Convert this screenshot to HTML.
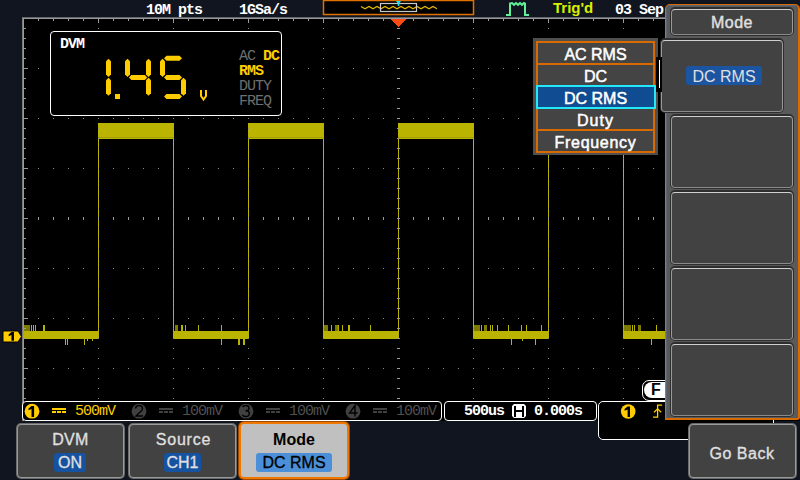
<!DOCTYPE html>
<html><head><meta charset="utf-8"><style>
*{margin:0;padding:0;box-sizing:border-box}
html,body{width:800px;height:480px;overflow:hidden;background:#11151f}
body{position:relative;font-family:"Liberation Sans",sans-serif}
.a{position:absolute}
.sb{background:#424242;border:1px solid;border-color:#cfcfcf #9a9a9a #8a8a8a #9a9a9a;box-shadow:0 0 0 1px #2e2e2e,0 -1px 0 1px #2e2e2e;border-radius:4px}
.bb{background:#424242;border:1px solid #9a9a9a;box-shadow:0 0 0 1px #6a6a6a;border-radius:4px}
.mono{font-family:"Liberation Mono",monospace;font-weight:700;font-size:15px;letter-spacing:-1px;white-space:pre;line-height:15px}
.sans{font-family:"Liberation Sans",sans-serif;font-weight:700;font-size:16px;white-space:pre;line-height:17px}
.c{text-align:center}
svg{position:absolute;left:0;top:0}
</style></head><body>
<svg width="800" height="480" viewBox="0 0 800 480" shape-rendering="crispEdges">
<rect x="22" y="17" width="778" height="404" fill="#000"/>
<rect x="22" y="17" width="778" height="1" fill="#62656c"/>
<rect x="22" y="18" width="778" height="1" fill="#9a9a9a"/>
<rect x="22" y="17" width="1" height="404" fill="#7a7a7a"/>
<rect x="23" y="18" width="1" height="403" fill="#9a9a9a"/>
<path d="M24 331h74v8h-74zM173 331h75v8h-75zM323 331h75v8h-75zM473 331h75v8h-75zM623 331h45v8h-45zM98 123h76v16h-76zM248 123h76v16h-76zM398 123h76v16h-76zM548 123h76v16h-76zM98 123h1v216h-1zM173 123h1v216h-1zM248 123h1v216h-1zM323 123h1v216h-1zM398 123h1v216h-1zM473 123h1v216h-1zM548 123h1v216h-1zM623 123h1v216h-1zM31 325h1v6h-1zM33 325h1v6h-1zM35 325h1v6h-1zM43 325h2v6h-2zM181 325h2v6h-2zM185 325h1v6h-1zM198 325h1v6h-1zM221 325h1v6h-1zM331 325h1v6h-1zM338 325h1v6h-1zM342 325h1v6h-1zM348 325h2v6h-2zM370 325h1v6h-1zM481 325h1v6h-1zM490 325h1v6h-1zM492 325h1v6h-1zM497 325h1v6h-1zM508 325h1v6h-1zM521 325h1v6h-1zM526 325h1v6h-1zM541 325h1v6h-1zM632 325h1v6h-1zM634 325h1v6h-1zM656 325h1v6h-1zM65 339h1v6h-1zM67 339h1v6h-1zM84 339h1v6h-1zM87 339h1v2h-1zM92 339h1v2h-1zM221 339h1v6h-1zM238 339h2v6h-2zM243 339h2v6h-2zM511 339h1v6h-1zM522 339h1v2h-1zM535 339h1v6h-1zM651 339h1v6h-1z" fill="#bab400"/>
<path d="M24 325h6v6h-6zM175 325h3v6h-3zM324 325h4v6h-4zM335 325h3v6h-3zM474 325h6v6h-6zM484 325h3v6h-3zM624 325h7v6h-7zM638 325h3v6h-3z" fill="#7d7a00"/>
<path d="M98 137h75v1h-75zM248 137h75v1h-75zM398 137h75v1h-75zM548 137h75v1h-75z" fill="#a4a000"/>
<path d="M38 19h1v2h-1zM53 19h1v2h-1zM68 19h1v2h-1zM83 19h1v2h-1zM98 19h1v4h-1zM113 19h1v2h-1zM128 19h1v2h-1zM143 19h1v2h-1zM158 19h1v2h-1zM173 19h1v4h-1zM188 19h1v2h-1zM203 19h1v2h-1zM218 19h1v2h-1zM233 19h1v2h-1zM248 19h1v4h-1zM263 19h1v2h-1zM278 19h1v2h-1zM293 19h1v2h-1zM308 19h1v2h-1zM323 19h1v4h-1zM338 19h1v2h-1zM353 19h1v2h-1zM368 19h1v2h-1zM383 19h1v2h-1zM398 19h1v4h-1zM413 19h1v2h-1zM428 19h1v2h-1zM443 19h1v2h-1zM458 19h1v2h-1zM473 19h1v4h-1zM488 19h1v2h-1zM503 19h1v2h-1zM518 19h1v2h-1zM533 19h1v2h-1zM548 19h1v4h-1zM563 19h1v2h-1zM578 19h1v2h-1zM593 19h1v2h-1zM608 19h1v2h-1zM623 19h1v4h-1zM638 19h1v2h-1zM653 19h1v2h-1zM668 19h1v2h-1zM683 19h1v2h-1zM698 19h1v4h-1zM713 19h1v2h-1zM728 19h1v2h-1zM743 19h1v2h-1zM758 19h1v2h-1zM773 19h1v4h-1zM788 19h1v2h-1zM24 28h2v1h-2zM24 38h2v1h-2zM24 48h2v1h-2zM24 58h2v1h-2zM24 68h4v1h-4zM24 78h2v1h-2zM24 88h2v1h-2zM24 98h2v1h-2zM24 108h2v1h-2zM24 118h4v1h-4zM24 128h2v1h-2zM24 138h2v1h-2zM24 148h2v1h-2zM24 158h2v1h-2zM24 168h4v1h-4zM24 178h2v1h-2zM24 188h2v1h-2zM24 198h2v1h-2zM24 208h2v1h-2zM24 218h4v1h-4zM24 228h2v1h-2zM24 238h2v1h-2zM24 248h2v1h-2zM24 258h2v1h-2zM24 268h4v1h-4zM24 278h2v1h-2zM24 288h2v1h-2zM24 298h2v1h-2zM24 308h2v1h-2zM24 318h4v1h-4zM24 328h2v1h-2zM24 338h2v1h-2zM24 348h2v1h-2zM24 358h2v1h-2zM24 368h4v1h-4zM24 378h2v1h-2zM24 388h2v1h-2zM24 398h2v1h-2zM24 408h2v1h-2zM24 418h4v1h-4z" fill="#9a9a9a"/>
<path d="M38 68h1v1h-1zM53 68h1v1h-1zM68 68h1v1h-1zM83 68h1v1h-1zM98 68h1v1h-1zM113 68h1v1h-1zM128 68h1v1h-1zM143 68h1v1h-1zM158 68h1v1h-1zM173 68h1v1h-1zM188 68h1v1h-1zM203 68h1v1h-1zM218 68h1v1h-1zM233 68h1v1h-1zM248 68h1v1h-1zM263 68h1v1h-1zM278 68h1v1h-1zM293 68h1v1h-1zM308 68h1v1h-1zM323 68h1v1h-1zM338 68h1v1h-1zM353 68h1v1h-1zM368 68h1v1h-1zM383 68h1v1h-1zM398 68h1v1h-1zM413 68h1v1h-1zM428 68h1v1h-1zM443 68h1v1h-1zM458 68h1v1h-1zM473 68h1v1h-1zM488 68h1v1h-1zM503 68h1v1h-1zM518 68h1v1h-1zM533 68h1v1h-1zM548 68h1v1h-1zM563 68h1v1h-1zM578 68h1v1h-1zM593 68h1v1h-1zM608 68h1v1h-1zM623 68h1v1h-1zM638 68h1v1h-1zM653 68h1v1h-1zM668 68h1v1h-1zM683 68h1v1h-1zM698 68h1v1h-1zM713 68h1v1h-1zM728 68h1v1h-1zM743 68h1v1h-1zM758 68h1v1h-1zM773 68h1v1h-1zM788 68h1v1h-1zM38 118h1v1h-1zM53 118h1v1h-1zM68 118h1v1h-1zM83 118h1v1h-1zM98 118h1v1h-1zM113 118h1v1h-1zM128 118h1v1h-1zM143 118h1v1h-1zM158 118h1v1h-1zM173 118h1v1h-1zM188 118h1v1h-1zM203 118h1v1h-1zM218 118h1v1h-1zM233 118h1v1h-1zM248 118h1v1h-1zM263 118h1v1h-1zM278 118h1v1h-1zM293 118h1v1h-1zM308 118h1v1h-1zM323 118h1v1h-1zM338 118h1v1h-1zM353 118h1v1h-1zM368 118h1v1h-1zM383 118h1v1h-1zM398 118h1v1h-1zM413 118h1v1h-1zM428 118h1v1h-1zM443 118h1v1h-1zM458 118h1v1h-1zM473 118h1v1h-1zM488 118h1v1h-1zM503 118h1v1h-1zM518 118h1v1h-1zM533 118h1v1h-1zM548 118h1v1h-1zM563 118h1v1h-1zM578 118h1v1h-1zM593 118h1v1h-1zM608 118h1v1h-1zM623 118h1v1h-1zM638 118h1v1h-1zM653 118h1v1h-1zM668 118h1v1h-1zM683 118h1v1h-1zM698 118h1v1h-1zM713 118h1v1h-1zM728 118h1v1h-1zM743 118h1v1h-1zM758 118h1v1h-1zM773 118h1v1h-1zM788 118h1v1h-1zM38 168h1v1h-1zM53 168h1v1h-1zM68 168h1v1h-1zM83 168h1v1h-1zM98 168h1v1h-1zM113 168h1v1h-1zM128 168h1v1h-1zM143 168h1v1h-1zM158 168h1v1h-1zM173 168h1v1h-1zM188 168h1v1h-1zM203 168h1v1h-1zM218 168h1v1h-1zM233 168h1v1h-1zM248 168h1v1h-1zM263 168h1v1h-1zM278 168h1v1h-1zM293 168h1v1h-1zM308 168h1v1h-1zM323 168h1v1h-1zM338 168h1v1h-1zM353 168h1v1h-1zM368 168h1v1h-1zM383 168h1v1h-1zM398 168h1v1h-1zM413 168h1v1h-1zM428 168h1v1h-1zM443 168h1v1h-1zM458 168h1v1h-1zM473 168h1v1h-1zM488 168h1v1h-1zM503 168h1v1h-1zM518 168h1v1h-1zM533 168h1v1h-1zM548 168h1v1h-1zM563 168h1v1h-1zM578 168h1v1h-1zM593 168h1v1h-1zM608 168h1v1h-1zM623 168h1v1h-1zM638 168h1v1h-1zM653 168h1v1h-1zM668 168h1v1h-1zM683 168h1v1h-1zM698 168h1v1h-1zM713 168h1v1h-1zM728 168h1v1h-1zM743 168h1v1h-1zM758 168h1v1h-1zM773 168h1v1h-1zM788 168h1v1h-1zM38 268h1v1h-1zM53 268h1v1h-1zM68 268h1v1h-1zM83 268h1v1h-1zM98 268h1v1h-1zM113 268h1v1h-1zM128 268h1v1h-1zM143 268h1v1h-1zM158 268h1v1h-1zM173 268h1v1h-1zM188 268h1v1h-1zM203 268h1v1h-1zM218 268h1v1h-1zM233 268h1v1h-1zM248 268h1v1h-1zM263 268h1v1h-1zM278 268h1v1h-1zM293 268h1v1h-1zM308 268h1v1h-1zM323 268h1v1h-1zM338 268h1v1h-1zM353 268h1v1h-1zM368 268h1v1h-1zM383 268h1v1h-1zM398 268h1v1h-1zM413 268h1v1h-1zM428 268h1v1h-1zM443 268h1v1h-1zM458 268h1v1h-1zM473 268h1v1h-1zM488 268h1v1h-1zM503 268h1v1h-1zM518 268h1v1h-1zM533 268h1v1h-1zM548 268h1v1h-1zM563 268h1v1h-1zM578 268h1v1h-1zM593 268h1v1h-1zM608 268h1v1h-1zM623 268h1v1h-1zM638 268h1v1h-1zM653 268h1v1h-1zM668 268h1v1h-1zM683 268h1v1h-1zM698 268h1v1h-1zM713 268h1v1h-1zM728 268h1v1h-1zM743 268h1v1h-1zM758 268h1v1h-1zM773 268h1v1h-1zM788 268h1v1h-1zM38 318h1v1h-1zM53 318h1v1h-1zM68 318h1v1h-1zM83 318h1v1h-1zM98 318h1v1h-1zM113 318h1v1h-1zM128 318h1v1h-1zM143 318h1v1h-1zM158 318h1v1h-1zM173 318h1v1h-1zM188 318h1v1h-1zM203 318h1v1h-1zM218 318h1v1h-1zM233 318h1v1h-1zM248 318h1v1h-1zM263 318h1v1h-1zM278 318h1v1h-1zM293 318h1v1h-1zM308 318h1v1h-1zM323 318h1v1h-1zM338 318h1v1h-1zM353 318h1v1h-1zM368 318h1v1h-1zM383 318h1v1h-1zM398 318h1v1h-1zM413 318h1v1h-1zM428 318h1v1h-1zM443 318h1v1h-1zM458 318h1v1h-1zM473 318h1v1h-1zM488 318h1v1h-1zM503 318h1v1h-1zM518 318h1v1h-1zM533 318h1v1h-1zM548 318h1v1h-1zM563 318h1v1h-1zM578 318h1v1h-1zM593 318h1v1h-1zM608 318h1v1h-1zM623 318h1v1h-1zM638 318h1v1h-1zM653 318h1v1h-1zM668 318h1v1h-1zM683 318h1v1h-1zM698 318h1v1h-1zM713 318h1v1h-1zM728 318h1v1h-1zM743 318h1v1h-1zM758 318h1v1h-1zM773 318h1v1h-1zM788 318h1v1h-1zM38 368h1v1h-1zM53 368h1v1h-1zM68 368h1v1h-1zM83 368h1v1h-1zM98 368h1v1h-1zM113 368h1v1h-1zM128 368h1v1h-1zM143 368h1v1h-1zM158 368h1v1h-1zM173 368h1v1h-1zM188 368h1v1h-1zM203 368h1v1h-1zM218 368h1v1h-1zM233 368h1v1h-1zM248 368h1v1h-1zM263 368h1v1h-1zM278 368h1v1h-1zM293 368h1v1h-1zM308 368h1v1h-1zM323 368h1v1h-1zM338 368h1v1h-1zM353 368h1v1h-1zM368 368h1v1h-1zM383 368h1v1h-1zM398 368h1v1h-1zM413 368h1v1h-1zM428 368h1v1h-1zM443 368h1v1h-1zM458 368h1v1h-1zM473 368h1v1h-1zM488 368h1v1h-1zM503 368h1v1h-1zM518 368h1v1h-1zM533 368h1v1h-1zM548 368h1v1h-1zM563 368h1v1h-1zM578 368h1v1h-1zM593 368h1v1h-1zM608 368h1v1h-1zM623 368h1v1h-1zM638 368h1v1h-1zM653 368h1v1h-1zM668 368h1v1h-1zM683 368h1v1h-1zM698 368h1v1h-1zM713 368h1v1h-1zM728 368h1v1h-1zM743 368h1v1h-1zM758 368h1v1h-1zM773 368h1v1h-1zM788 368h1v1h-1zM98 28h1v1h-1zM98 38h1v1h-1zM98 48h1v1h-1zM98 58h1v1h-1zM98 78h1v1h-1zM98 88h1v1h-1zM98 98h1v1h-1zM98 108h1v1h-1zM98 128h1v1h-1zM98 138h1v1h-1zM98 148h1v1h-1zM98 158h1v1h-1zM98 178h1v1h-1zM98 188h1v1h-1zM98 198h1v1h-1zM98 208h1v1h-1zM98 228h1v1h-1zM98 238h1v1h-1zM98 248h1v1h-1zM98 258h1v1h-1zM98 278h1v1h-1zM98 288h1v1h-1zM98 298h1v1h-1zM98 308h1v1h-1zM98 328h1v1h-1zM98 338h1v1h-1zM98 348h1v1h-1zM98 358h1v1h-1zM98 378h1v1h-1zM98 388h1v1h-1zM98 398h1v1h-1zM98 408h1v1h-1zM98 418h1v1h-1zM173 28h1v1h-1zM173 38h1v1h-1zM173 48h1v1h-1zM173 58h1v1h-1zM173 78h1v1h-1zM173 88h1v1h-1zM173 98h1v1h-1zM173 108h1v1h-1zM173 128h1v1h-1zM173 138h1v1h-1zM173 148h1v1h-1zM173 158h1v1h-1zM173 178h1v1h-1zM173 188h1v1h-1zM173 198h1v1h-1zM173 208h1v1h-1zM173 228h1v1h-1zM173 238h1v1h-1zM173 248h1v1h-1zM173 258h1v1h-1zM173 278h1v1h-1zM173 288h1v1h-1zM173 298h1v1h-1zM173 308h1v1h-1zM173 328h1v1h-1zM173 338h1v1h-1zM173 348h1v1h-1zM173 358h1v1h-1zM173 378h1v1h-1zM173 388h1v1h-1zM173 398h1v1h-1zM173 408h1v1h-1zM173 418h1v1h-1zM248 28h1v1h-1zM248 38h1v1h-1zM248 48h1v1h-1zM248 58h1v1h-1zM248 78h1v1h-1zM248 88h1v1h-1zM248 98h1v1h-1zM248 108h1v1h-1zM248 128h1v1h-1zM248 138h1v1h-1zM248 148h1v1h-1zM248 158h1v1h-1zM248 178h1v1h-1zM248 188h1v1h-1zM248 198h1v1h-1zM248 208h1v1h-1zM248 228h1v1h-1zM248 238h1v1h-1zM248 248h1v1h-1zM248 258h1v1h-1zM248 278h1v1h-1zM248 288h1v1h-1zM248 298h1v1h-1zM248 308h1v1h-1zM248 328h1v1h-1zM248 338h1v1h-1zM248 348h1v1h-1zM248 358h1v1h-1zM248 378h1v1h-1zM248 388h1v1h-1zM248 398h1v1h-1zM248 408h1v1h-1zM248 418h1v1h-1zM323 28h1v1h-1zM323 38h1v1h-1zM323 48h1v1h-1zM323 58h1v1h-1zM323 78h1v1h-1zM323 88h1v1h-1zM323 98h1v1h-1zM323 108h1v1h-1zM323 128h1v1h-1zM323 138h1v1h-1zM323 148h1v1h-1zM323 158h1v1h-1zM323 178h1v1h-1zM323 188h1v1h-1zM323 198h1v1h-1zM323 208h1v1h-1zM323 228h1v1h-1zM323 238h1v1h-1zM323 248h1v1h-1zM323 258h1v1h-1zM323 278h1v1h-1zM323 288h1v1h-1zM323 298h1v1h-1zM323 308h1v1h-1zM323 328h1v1h-1zM323 338h1v1h-1zM323 348h1v1h-1zM323 358h1v1h-1zM323 378h1v1h-1zM323 388h1v1h-1zM323 398h1v1h-1zM323 408h1v1h-1zM323 418h1v1h-1zM473 28h1v1h-1zM473 38h1v1h-1zM473 48h1v1h-1zM473 58h1v1h-1zM473 78h1v1h-1zM473 88h1v1h-1zM473 98h1v1h-1zM473 108h1v1h-1zM473 128h1v1h-1zM473 138h1v1h-1zM473 148h1v1h-1zM473 158h1v1h-1zM473 178h1v1h-1zM473 188h1v1h-1zM473 198h1v1h-1zM473 208h1v1h-1zM473 228h1v1h-1zM473 238h1v1h-1zM473 248h1v1h-1zM473 258h1v1h-1zM473 278h1v1h-1zM473 288h1v1h-1zM473 298h1v1h-1zM473 308h1v1h-1zM473 328h1v1h-1zM473 338h1v1h-1zM473 348h1v1h-1zM473 358h1v1h-1zM473 378h1v1h-1zM473 388h1v1h-1zM473 398h1v1h-1zM473 408h1v1h-1zM473 418h1v1h-1zM548 28h1v1h-1zM548 38h1v1h-1zM548 48h1v1h-1zM548 58h1v1h-1zM548 78h1v1h-1zM548 88h1v1h-1zM548 98h1v1h-1zM548 108h1v1h-1zM548 128h1v1h-1zM548 138h1v1h-1zM548 148h1v1h-1zM548 158h1v1h-1zM548 178h1v1h-1zM548 188h1v1h-1zM548 198h1v1h-1zM548 208h1v1h-1zM548 228h1v1h-1zM548 238h1v1h-1zM548 248h1v1h-1zM548 258h1v1h-1zM548 278h1v1h-1zM548 288h1v1h-1zM548 298h1v1h-1zM548 308h1v1h-1zM548 328h1v1h-1zM548 338h1v1h-1zM548 348h1v1h-1zM548 358h1v1h-1zM548 378h1v1h-1zM548 388h1v1h-1zM548 398h1v1h-1zM548 408h1v1h-1zM548 418h1v1h-1zM623 28h1v1h-1zM623 38h1v1h-1zM623 48h1v1h-1zM623 58h1v1h-1zM623 78h1v1h-1zM623 88h1v1h-1zM623 98h1v1h-1zM623 108h1v1h-1zM623 128h1v1h-1zM623 138h1v1h-1zM623 148h1v1h-1zM623 158h1v1h-1zM623 178h1v1h-1zM623 188h1v1h-1zM623 198h1v1h-1zM623 208h1v1h-1zM623 228h1v1h-1zM623 238h1v1h-1zM623 248h1v1h-1zM623 258h1v1h-1zM623 278h1v1h-1zM623 288h1v1h-1zM623 298h1v1h-1zM623 308h1v1h-1zM623 328h1v1h-1zM623 338h1v1h-1zM623 348h1v1h-1zM623 358h1v1h-1zM623 378h1v1h-1zM623 388h1v1h-1zM623 398h1v1h-1zM623 408h1v1h-1zM623 418h1v1h-1zM698 28h1v1h-1zM698 38h1v1h-1zM698 48h1v1h-1zM698 58h1v1h-1zM698 78h1v1h-1zM698 88h1v1h-1zM698 98h1v1h-1zM698 108h1v1h-1zM698 128h1v1h-1zM698 138h1v1h-1zM698 148h1v1h-1zM698 158h1v1h-1zM698 178h1v1h-1zM698 188h1v1h-1zM698 198h1v1h-1zM698 208h1v1h-1zM698 228h1v1h-1zM698 238h1v1h-1zM698 248h1v1h-1zM698 258h1v1h-1zM698 278h1v1h-1zM698 288h1v1h-1zM698 298h1v1h-1zM698 308h1v1h-1zM698 328h1v1h-1zM698 338h1v1h-1zM698 348h1v1h-1zM698 358h1v1h-1zM698 378h1v1h-1zM698 388h1v1h-1zM698 398h1v1h-1zM698 408h1v1h-1zM698 418h1v1h-1zM773 28h1v1h-1zM773 38h1v1h-1zM773 48h1v1h-1zM773 58h1v1h-1zM773 78h1v1h-1zM773 88h1v1h-1zM773 98h1v1h-1zM773 108h1v1h-1zM773 128h1v1h-1zM773 138h1v1h-1zM773 148h1v1h-1zM773 158h1v1h-1zM773 178h1v1h-1zM773 188h1v1h-1zM773 198h1v1h-1zM773 208h1v1h-1zM773 228h1v1h-1zM773 238h1v1h-1zM773 248h1v1h-1zM773 258h1v1h-1zM773 278h1v1h-1zM773 288h1v1h-1zM773 298h1v1h-1zM773 308h1v1h-1zM773 328h1v1h-1zM773 338h1v1h-1zM773 348h1v1h-1zM773 358h1v1h-1zM773 378h1v1h-1zM773 388h1v1h-1zM773 398h1v1h-1zM773 408h1v1h-1zM773 418h1v1h-1z" fill="#8c8c8c"/>
<path d="M397 28h3v1h-3zM397 38h3v1h-3zM397 48h3v1h-3zM397 58h3v1h-3zM397 68h3v1h-3zM397 78h3v1h-3zM397 88h3v1h-3zM397 98h3v1h-3zM397 108h3v1h-3zM397 118h3v1h-3zM397 128h3v1h-3zM397 138h3v1h-3zM397 148h3v1h-3zM397 158h3v1h-3zM397 168h3v1h-3zM397 178h3v1h-3zM397 188h3v1h-3zM397 198h3v1h-3zM397 208h3v1h-3zM397 218h3v1h-3zM397 228h3v1h-3zM397 238h3v1h-3zM397 248h3v1h-3zM397 258h3v1h-3zM397 268h3v1h-3zM397 278h3v1h-3zM397 288h3v1h-3zM397 298h3v1h-3zM397 308h3v1h-3zM397 318h3v1h-3zM397 328h3v1h-3zM397 338h3v1h-3zM397 348h3v1h-3zM397 358h3v1h-3zM397 368h3v1h-3zM397 378h3v1h-3zM397 388h3v1h-3zM397 398h3v1h-3zM397 408h3v1h-3zM397 418h3v1h-3zM38 217h1v3h-1zM53 217h1v3h-1zM68 217h1v3h-1zM83 217h1v3h-1zM98 217h1v3h-1zM113 217h1v3h-1zM128 217h1v3h-1zM143 217h1v3h-1zM158 217h1v3h-1zM173 217h1v3h-1zM188 217h1v3h-1zM203 217h1v3h-1zM218 217h1v3h-1zM233 217h1v3h-1zM248 217h1v3h-1zM263 217h1v3h-1zM278 217h1v3h-1zM293 217h1v3h-1zM308 217h1v3h-1zM323 217h1v3h-1zM338 217h1v3h-1zM353 217h1v3h-1zM368 217h1v3h-1zM383 217h1v3h-1zM398 217h1v3h-1zM413 217h1v3h-1zM428 217h1v3h-1zM443 217h1v3h-1zM458 217h1v3h-1zM473 217h1v3h-1zM488 217h1v3h-1zM503 217h1v3h-1zM518 217h1v3h-1zM533 217h1v3h-1zM548 217h1v3h-1zM563 217h1v3h-1zM578 217h1v3h-1zM593 217h1v3h-1zM608 217h1v3h-1zM623 217h1v3h-1zM638 217h1v3h-1zM653 217h1v3h-1zM668 217h1v3h-1zM683 217h1v3h-1zM698 217h1v3h-1zM713 217h1v3h-1zM728 217h1v3h-1zM743 217h1v3h-1zM758 217h1v3h-1zM773 217h1v3h-1zM788 217h1v3h-1z" fill="#9a9a9a"/>
<polygon points="390,19 406,19 398,27" fill="#ff4a12"/>
</svg>

<div class="a mono" style="left:146px;top:3px;color:#fff">10M pts</div>
<div class="a mono" style="left:239px;top:3px;color:#fff">1GSa/s</div>
<svg width="800" height="20" viewBox="0 0 800 20">
<rect x="323.5" y="0.5" width="150" height="14" fill="#000" stroke="#e07000" stroke-width="1.5"/>
<polyline points="361,6.5 365,8.8 369,6.5 373,8.8 377,6.5 381,8.8 385,6.5 389,8.8 393,6.5 397,8.8 401,6.5 405,8.8 409,6.5 413,8.8 417,6.5 421,8.8 425,6.5 429,8.8 433,6.5 437,8.8" fill="none" stroke="#e8b800" stroke-width="1.2"/>
<rect x="380.5" y="3.5" width="36" height="8" fill="none" stroke="#c8c8c8" stroke-width="1.2"/>
<polygon points="396,1 401,1 399.3,3.5 399.3,6 397.7,6 397.7,3.5" fill="#20e0f0"/>
<polyline points="506,15 510,15 510,3.5 512,3 514,4.8 516,3 518,4.8 520,3 522,4.8 524,3 525,3.5 525,15 529,15" fill="none" stroke="#5ef29a" stroke-width="2"/>
</svg>
<div class="a sans" style="left:553px;top:-1px;color:#d8f000;font-size:15px">Trig'd</div>
<div class="a mono" style="left:615px;top:3px;color:#fff">03 Sep</div>

<div class="a" style="left:50px;top:31px;width:232px;height:85px;border:1px solid #fff;border-radius:4px;background:#000"></div>
<div class="a mono" style="left:60px;top:37px;color:#fff">DVM</div>
<svg width="800" height="200" viewBox="0 0 800 200" fill="#ffcc00">
<polygon points="108.5,58.8 111,61.3 111,74.5 108.5,77 106,74.5 106,61.3"/><polygon points="108.5,77.8 111,80.3 111,93.3 108.5,95.8 106,93.3 106,80.3"/><polygon points="127.5,58.8 130,61.3 130,74.5 127.5,77 125,74.5 125,61.3"/><polygon points="128.9,77.5 131.4,75 144.8,75 147.3,77.5 144.8,80 131.4,80"/><polygon points="148.5,58.8 151,61.3 151,74.5 148.5,77 146,74.5 146,61.3"/><polygon points="148.5,77.8 151,80.3 151,93.3 148.5,95.8 146,93.3 146,80.3"/><polygon points="164,58.3 166.5,55.8 179.5,55.8 182,58.3 179.5,60.8 166.5,60.8"/><polygon points="162.5,58.8 165,61.3 165,74.5 162.5,77 160,74.5 160,61.3"/><polygon points="164,77.5 166.5,75 179.5,75 182,77.5 179.5,80 166.5,80"/><polygon points="183.5,77.8 186,80.3 186,93.3 183.5,95.8 181,93.3 181,80.3"/><polygon points="164,96.5 166.5,94 179.5,94 182,96.5 179.5,99 166.5,99"/>
<rect x="115" y="94" width="5" height="5"/>
<path d="M201 90v6l2.5 3.5l2.5 -3.5v-6" fill="none" stroke="#ffcc00" stroke-width="2"/>
</svg>
<div class="a mono" style="font-weight:400;left:239px;top:49px;color:#6e6e6e">AC <span style="color:#ffcc00;font-weight:700">DC</span>
<span style="color:#ffcc00;font-weight:700">RMS</span>
DUTY
FREQ</div>

<!-- popup -->
<div class="a" style="left:533px;top:38px;width:125px;height:117px;background:#505050"></div>
<div class="a" style="left:536px;top:41px;width:119px;height:112px;background:#444;border:2px solid #d86a00"></div>
<div class="a" style="left:536px;top:63px;width:119px;height:2px;background:#d86a00"></div>
<div class="a" style="left:536px;top:129px;width:119px;height:2px;background:#d86a00"></div>
<div class="a" style="left:536px;top:85px;width:120px;height:24px;background:#0f4c91;border:2px solid #22e8f8"></div>
<div class="a sans c" style="left:536px;top:46px;width:119px;color:#fff;font-weight:400;-webkit-text-stroke:0.5px #fff;">AC RMS</div>
<div class="a sans c" style="left:536px;top:68px;width:119px;color:#fff;font-weight:400;-webkit-text-stroke:0.5px #fff;">DC</div>
<div class="a sans c" style="left:536px;top:90px;width:119px;color:#fff;font-weight:400;-webkit-text-stroke:0.5px #fff;">DC RMS</div>
<div class="a sans c" style="left:536px;top:112px;width:119px;color:#fff;font-weight:400;-webkit-text-stroke:0.5px #fff;letter-spacing:1px;">Duty</div>
<div class="a sans c" style="left:536px;top:134px;width:119px;color:#fff;font-weight:400;-webkit-text-stroke:0.5px #fff;letter-spacing:0.7px;">Frequency</div>

<!-- status bar -->
<div class="a" style="left:22px;top:401px;width:420px;height:20px;border:1px solid #fff;border-radius:4px;background:#000"></div>
<div class="a" style="left:444px;top:401px;width:153px;height:20px;border:1px solid #fff;border-radius:4px;background:#000"></div>
<div class="a" style="left:598px;top:401px;width:176px;height:39px;border:1px solid #fff;border-radius:5px;background:#000"></div>
<svg width="800" height="480" viewBox="0 0 800 480">
<circle cx="32" cy="411.2" r="7.4" fill="#ffcc00"/>
<circle cx="139" cy="411.2" r="7.4" fill="#404040"/>
<circle cx="246" cy="411.2" r="7.4" fill="#404040"/>
<circle cx="353" cy="411.2" r="7.4" fill="#404040"/>
<g fill="none" stroke="#000" stroke-width="1.4">
<path d="M135.5 408.5q0.5 -3 3.5 -3q3.5 0 3.5 3q0 2 -3 4l-3.5 3.5h7"/>
<path d="M242.5 407q1 -1.5 3.5 -1.5q3 0 3 2.7q0 2.3 -3 2.5q3.3 0.2 3.3 2.8q0 3 -3.5 3q-2.5 0 -3.5 -1.5M245.5 410.7h0.5"/>
<path d="M355 416.5v-11l-5.5 7.5h8"/>
</g>
<g shape-rendering="crispEdges">
<path d="M52 408h14v2h-14zM52 411h4v2h-4zM57 411h4v2h-4zM62 411h4v2h-4z" fill="#ffcc00"/>
<path d="M159 408h14v2h-14zM159 411h4v2h-4zM164 411h4v2h-4zM169 411h4v2h-4z" fill="#404040"/>
<path d="M266 408h14v2h-14zM266 411h4v2h-4zM271 411h4v2h-4zM276 411h4v2h-4z" fill="#404040"/>
<path d="M373 408h14v2h-14zM373 411h4v2h-4zM378 411h4v2h-4zM383 411h4v2h-4z" fill="#404040"/>
</g>
<path d="M512 406l2 -2h10l2 2v10l-2 2h-10l-2 -2z" fill="#fff"/>
<path d="M514 406h2v4h6v-4h2v11h-2v-5h-6v5h-2z" fill="#000" shape-rendering="crispEdges"/>
<circle cx="628.2" cy="411.5" r="7.3" fill="#ffcc00"/>
<path d="M653 417.2h4.6v-12h4.5" fill="none" stroke="#ffcc00" stroke-width="1.3"/>
<path d="M654 412.2l3.6 -3.4l3.6 3.4" fill="none" stroke="#ffcc00" stroke-width="1.3"/>
<g fill="#000"><polygon points="28.5,408.5 31.5,406 34.1,406 34.1,417 31.5,417 31.5,409 28.5,410.3"/><polygon points="624.6,409 627.6,406.5 630,406.5 630,417 627.6,417 627.6,409.5 624.6,410.8"/></g>
<path d="M3 331h15l3.5 5.5l-3.5 5.5h-15z" fill="#ffcc00" stroke="#000" stroke-width="1"/>
<g fill="#000"><polygon points="8.65,334.5 11.45,332 13.95,332 13.95,340.8 11.45,340.8 11.45,335 8.65,336.3"/></g>
</svg>
<div class="a mono" style="font-weight:400;left:75px;top:404px;color:#ffcc00">500mV</div>
<div class="a mono" style="font-weight:400;left:182px;top:404px;color:#505050">100mV</div>
<div class="a mono" style="font-weight:400;left:289px;top:404px;color:#505050">100mV</div>
<div class="a mono" style="font-weight:400;left:396px;top:404px;color:#505050">100mV</div>
<div class="a mono" style="left:464px;top:404px;color:#fff">500us</div>
<div class="a mono" style="left:534px;top:404px;color:#fff">0.000s</div>
<!-- F pill -->
<div class="a" style="left:642px;top:380px;width:40px;height:21px;border:1px solid #fff;border-radius:7px;background:#000"></div>
<div class="a" style="left:644px;top:382px;width:36px;height:16px;border-radius:8px;background:#fff"></div>
<div class="a sans" style="left:651px;top:381px;color:#000;font-size:16px">F</div>

<!-- side panel -->
<div class="a" style="left:665px;top:4px;width:135px;height:416px;background:#5a5a5a;border:1px solid #d86a00;border-right-width:2px;border-bottom-width:2px;border-radius:5px 5px 3px 0"></div>
<div class="a" style="left:666px;top:5px;width:131px;height:413px;border:1px solid #5f6672;border-right:0;border-bottom:0;border-radius:4px 4px 0 0"></div>
<div class="a sb" style="left:671px;top:9px;width:122px;height:26px"></div>
<div class="a sans c" style="left:671px;top:14px;width:122px;color:#e0e0e0;font-weight:400;letter-spacing:0.5px;-webkit-text-stroke:0.4px #e0e0e0">Mode</div>
<div class="a sb" style="left:661px;top:40px;width:122px;height:72px"></div>
<div class="a" style="left:686px;top:66px;width:76px;height:19px;background:#1b54a0;border-radius:3px"></div>
<div class="a sans c" style="left:663px;top:68px;width:122px;color:#e0e0e0;font-weight:400">DC RMS</div>
<div class="a sb" style="left:671px;top:116px;width:122px;height:72px"></div>
<div class="a sb" style="left:671px;top:192px;width:122px;height:72px"></div>
<div class="a sb" style="left:671px;top:268px;width:122px;height:72px"></div>
<div class="a sb" style="left:671px;top:344px;width:122px;height:72px"></div>

<div class="a" style="left:656px;top:57px;width:6px;height:35px;background:#000"></div>
<div class="a" style="left:659px;top:60px;width:1px;height:28px;background:#fff"></div>

<!-- bottom buttons -->
<div class="a bb" style="left:17px;top:424px;width:107px;height:54px"></div>
<div class="a bb" style="left:129px;top:424px;width:107px;height:54px"></div>
<div class="a" style="left:239px;top:422px;width:110px;height:57px;background:#c0c0c0;border:2px solid #f07800;box-shadow:0 0 0 1px #a04800;border-radius:5px"></div>
<div class="a bb" style="left:689px;top:424px;width:107px;height:54px"></div>
<div class="a sans c" style="left:16.5px;top:431px;width:108px;color:#e0e0e0;font-weight:400;letter-spacing:0.3px;-webkit-text-stroke:0.3px #e0e0e0">DVM</div>
<div class="a sans c" style="left:129.5px;top:431px;width:108px;color:#e0e0e0;font-weight:400;letter-spacing:0.8px;-webkit-text-stroke:0.3px #e0e0e0">Source</div>
<div class="a sans c" style="left:239px;top:431px;width:110px;color:#000">Mode</div>
<div class="a sans c" style="left:688px;top:445px;width:108px;color:#e0e0e0;font-weight:400;letter-spacing:0.5px;-webkit-text-stroke:0.3px #e0e0e0">Go Back</div>
<div class="a" style="left:54px;top:453px;width:32px;height:19px;background:#1552a0;border-radius:3px"></div>
<div class="a sans c" style="left:54px;top:454px;width:32px;color:#e0e0e0;font-weight:400;-webkit-text-stroke:0.3px #e0e0e0">ON</div>
<div class="a" style="left:164px;top:453px;width:37px;height:19px;background:#1552a0;border-radius:3px"></div>
<div class="a sans c" style="left:164px;top:454px;width:37px;color:#e0e0e0;font-weight:400;-webkit-text-stroke:0.3px #e0e0e0">CH1</div>
<div class="a" style="left:256px;top:453px;width:76px;height:19px;background:#4a8fd8;border-radius:3px"></div>
<div class="a sans c" style="left:256px;top:454px;width:76px;color:#000;font-weight:400;-webkit-text-stroke:0.3px #000">DC RMS</div>
</body></html>
